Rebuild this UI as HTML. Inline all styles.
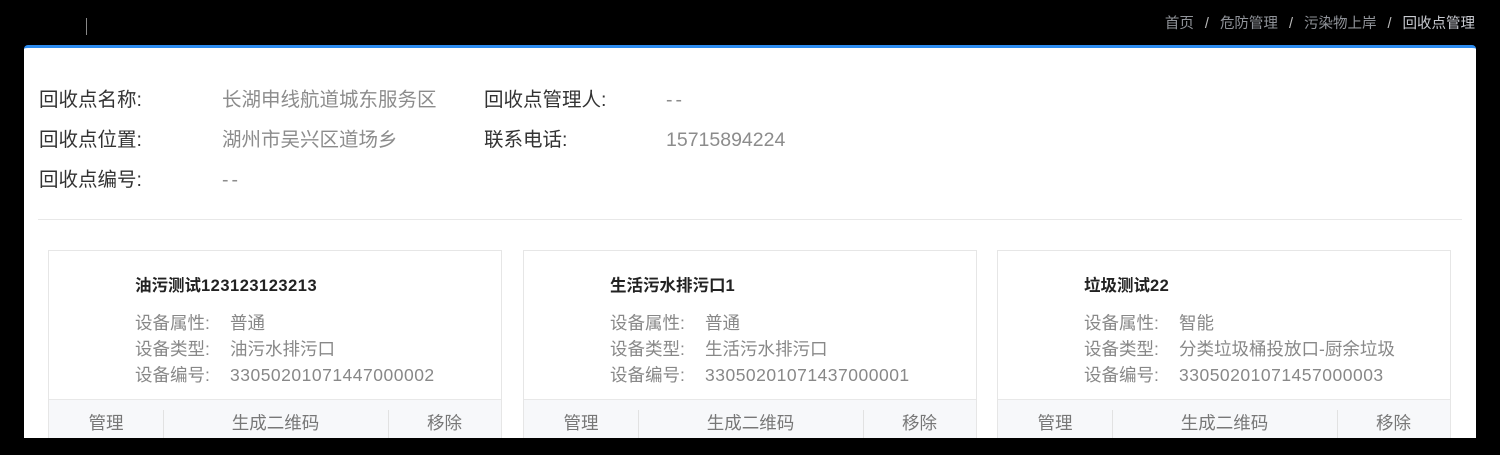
<!DOCTYPE html><html><head><meta charset="utf-8"><style>
*{margin:0;padding:0;box-sizing:border-box}
body{width:1500px;height:455px;background:#000;font-family:"Liberation Sans","Noto Sans CJK SC",sans-serif;position:relative;overflow:hidden}
.vl{position:absolute;left:86px;top:18px;width:1px;height:17px;background:#888}
.bc{position:absolute;right:25px;top:15px;font-size:14.5px;color:#909399;line-height:18px}
.bc span.s{margin:0 11px;color:#bbb}
.bc .last{color:#c8cad0}
.panel{position:absolute;left:24px;top:45px;width:1452px;height:393px;background:#fff;border-top:3px solid #2d8cf0;border-radius:4px 4px 0 0;overflow:hidden}
.r{position:absolute;font-size:19.5px;line-height:24px;color:#333}
.v{color:#8c8c8c}
.n{letter-spacing:0.5px}
.hr{position:absolute;left:14px;top:171px;width:1424px;height:1px;background:#e8e8e8}
.card{position:absolute;top:202px;width:454px;height:200px;border:1px solid #e6e6e6}
.t{position:absolute;left:86px;top:24px;font-size:16.5px;font-weight:bold;color:#222;line-height:22px}
.rows{position:absolute;left:86px;top:59px;font-size:17.5px;line-height:26px;color:#888}
.rows b{font-weight:normal;display:inline-block;width:95px}
.ft{position:absolute;left:0;top:148px;width:452px;height:52px;background:#f7f8fa;border-top:1px solid #e8e8e8;font-size:17.5px;color:#777}
.ft div{position:absolute;top:12px;line-height:22px;text-align:center}
.ft i{position:absolute;top:10px;width:1px;height:40px;background:#e2e2e2}
</style></head><body>
<div class="vl"></div>
<div class="bc">首页<span class="s">/</span>危防管理<span class="s">/</span>污染物上岸<span class="s">/</span><span class="last">回收点管理</span></div>
<div class="panel">
<div class="r" style="left:15px;top:40px">回收点名称:</div><div class="r v" style="left:198px;top:40px">长湖申线航道城东服务区</div>
<div class="r" style="left:460px;top:40px">回收点管理人:</div><div class="r v" style="left:642px;top:40px;letter-spacing:3px">--</div>
<div class="r" style="left:15px;top:80px">回收点位置:</div><div class="r v" style="left:198px;top:80px">湖州市吴兴区道场乡</div>
<div class="r" style="left:460px;top:80px">联系电话:</div><div class="r v" style="left:642px;top:80px">15715894224</div>
<div class="r" style="left:15px;top:120px">回收点编号:</div><div class="r v" style="left:198px;top:120px;letter-spacing:3px">--</div>
<div class="hr"></div>
<div class="card" style="left:24px"><div class="t">油污测试<span class="n">123123123213</span></div><div class="rows"><div><b>设备属性:</b>普通</div><div><b>设备类型:</b>油污水排污口</div><div><b>设备编号:</b><span class="n">33050201071447000002</span></div></div>
<div class="ft"><div style="left:0;width:114px">管理</div><i style="left:114px"></i><div style="left:114px;width:225px">生成二维码</div><i style="left:339px"></i><div style="left:339px;width:113px">移除</div></div></div>
<div class="card" style="left:499px"><div class="t">生活污水排污口<span class="n">1</span></div><div class="rows"><div><b>设备属性:</b>普通</div><div><b>设备类型:</b>生活污水排污口</div><div><b>设备编号:</b><span class="n">33050201071437000001</span></div></div>
<div class="ft"><div style="left:0;width:114px">管理</div><i style="left:114px"></i><div style="left:114px;width:225px">生成二维码</div><i style="left:339px"></i><div style="left:339px;width:113px">移除</div></div></div>
<div class="card" style="left:973px"><div class="t">垃圾测试<span class="n">22</span></div><div class="rows"><div><b>设备属性:</b>智能</div><div><b>设备类型:</b>分类垃圾桶投放口-厨余垃圾</div><div><b>设备编号:</b><span class="n">33050201071457000003</span></div></div>
<div class="ft"><div style="left:0;width:114px">管理</div><i style="left:114px"></i><div style="left:114px;width:225px">生成二维码</div><i style="left:339px"></i><div style="left:339px;width:113px">移除</div></div></div>
</div>
</body></html>
